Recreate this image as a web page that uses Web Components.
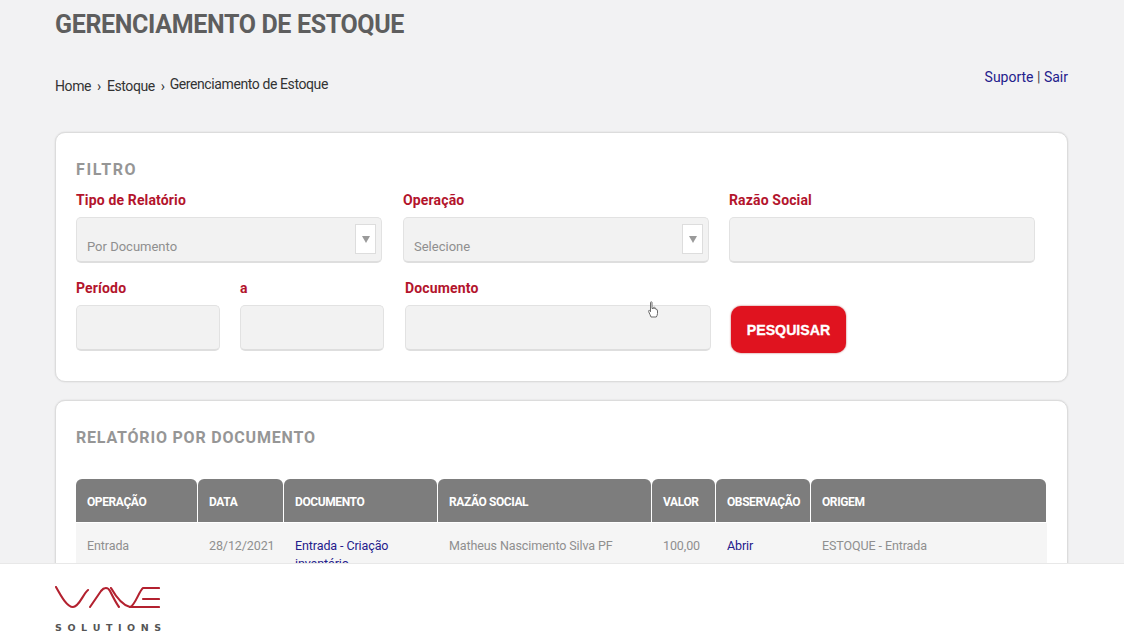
<!DOCTYPE html>
<html lang="pt-BR">
<head>
<meta charset="utf-8">
<title>Gerenciamento de Estoque</title>
<style>
  html, body { margin: 0; height: 100%; overflow: hidden; background: #f2f2f3; }
  body { font-family: Roboto, "DejaVu Sans", sans-serif; }
</style>
</head>
<body>
<stock-page>
  <page-top></page-top>
  <panel-card heading="FILTRO" style="height:250px;--head-top:27px;--head-gap:11px;--head-ls:1.6px">
    <filter-form></filter-form>
  </panel-card>
  <panel-card heading="RELATÓRIO POR DOCUMENTO" style="height:300px;--head-top:27px;--head-gap:31px;--head-ls:.8px">
    <report-table></report-table>
  </panel-card>
</stock-page>
<hand-cursor></hand-cursor>
<wave-footer></wave-footer>

<script>
class StockPage extends HTMLElement {
  connectedCallback () {
    this.attachShadow({mode: 'open'}).innerHTML = `
      <style>
        :host { display: flex; flex-direction: column; gap: 18px; padding: 0 56px 0 55px; }
      </style>
      <slot></slot>
    `;
  }
}

class PageTop extends HTMLElement {
  connectedCallback () {
    this.attachShadow({mode: 'open'}).innerHTML = `
      <style>
        :host { display: block; height: 114px; }
        h1 { margin: 0; padding-top: 9px; font-size: 25px; line-height: 32px; font-weight: 700; letter-spacing: -.35px; color: #5e5e5e; white-space: nowrap; }
        .line { display: flex; justify-content: space-between; margin-top: 35px; font-size: 14px; line-height: 18px; color: #333; }
        .crumbs { display: flex; gap: 6px; padding-top: 1px; letter-spacing: -.4px; }
        .crumbs .last { margin-top: -2px; margin-left: -1px; }
        .links { margin-top: -8px; color: #24208c; }
        .links i { font-style: normal; color: #444; }
      </style>
      <h1>GERENCIAMENTO DE ESTOQUE</h1>
      <div class="line">
        <div class="crumbs">
          <span>Home</span><span>›</span><span>Estoque</span><span>›</span><span class="last">Gerenciamento de Estoque</span>
        </div>
        <div class="links">Suporte <i>|</i> Sair</div>
      </div>
    `;
  }
}

class PanelCard extends HTMLElement {
  connectedCallback () {
    this.attachShadow({mode: 'open'}).innerHTML = `
      <style>
        :host { display: block; box-sizing: border-box; background: #fff; border: 1px solid #dcdcdc; border-radius: 10px; padding: var(--head-top) 20px 0; box-shadow: 0 0 2px rgba(0,0,0,0.12); }
        h2 { margin: 0 0 var(--head-gap); font-size: 16px; line-height: 20px; font-weight: 700; letter-spacing: var(--head-ls); color: #969696; }
      </style>
      <h2>${this.getAttribute('heading')}</h2>
      <slot></slot>
    `;
  }
}

class FormField extends HTMLElement {
  connectedCallback () {
    let value = this.getAttribute('value') || '';
    let arrow = this.hasAttribute('select') ? '<span class="arrow"><svg width="8" height="7" viewBox="0 0 8 7"><path d="M0 0h8L4 7z" fill="#9a9a9a"/></svg></span>' : '';
    this.attachShadow({mode: 'open'}).innerHTML = `
      <style>
        :host { display: block; width: 306px; }
        label { display: block; height: 18px; font-size: 14px; line-height: 19px; font-weight: 700; letter-spacing: .15px; color: #b3142c; white-space: nowrap; }
        .box { position: relative; box-sizing: border-box; height: 46px; margin-top: 8px; padding: 20px 10px 0; background: #f2f2f2; border: 1px solid #e2e2e2; border-bottom: 2px solid #dedede; border-radius: 5px; font-size: 13px; line-height: 18px; color: #8f8f8f; }
        .arrow { position: absolute; top: 6px; right: 5px; width: 21px; height: 30px; display: flex; align-items: center; justify-content: center; background: #fff; border: 1px solid #ddd; box-sizing: border-box; }
      </style>
      <label>${this.getAttribute('label')}</label>
      <div class="box">${value}${arrow}</div>
    `;
  }
}

class FilterForm extends HTMLElement {
  connectedCallback () {
    this.attachShadow({mode: 'open'}).innerHTML = `
      <style>
        :host { display: block; }
        .row { display: flex; gap: 20px; }
        .first form-field:nth-child(2) { margin-left: 1px; }
        .second { margin-top: 16px; }
        .second form-field:nth-child(3) { margin-left: 1px; }
        .short { width: 144px; }
        button { align-self: flex-end; width: 115px; height: 47px; margin-bottom: -2px; padding: 0; border: 0; border-radius: 10px; background: #e0131f; box-shadow: 0 0 2px rgba(160,0,0,.7); color: #fff; font-family: "Liberation Sans", sans-serif; font-size: 14.2px; font-weight: 700; -webkit-text-stroke: .3px #fff; }
      </style>
      <div class="row first">
        <form-field label="Tipo de Relatório" value="Por Documento" select></form-field>
        <form-field label="Operação" value="Selecione" select></form-field>
        <form-field label="Razão Social"></form-field>
      </div>
      <div class="row second">
        <form-field class="short" label="Período"></form-field>
        <form-field class="short" label="a"></form-field>
        <form-field label="Documento"></form-field>
        <button type="button">PESQUISAR</button>
      </div>
    `;
  }
}

class ReportTable extends HTMLElement {
  connectedCallback () {
    let cols = [
      ['OPERAÇÃO', 'Entrada', 121],
      ['DATA', '28/12/2021', 85],
      ['DOCUMENTO', '<a>Entrada - Criação inventário</a>', 153],
      ['RAZÃO SOCIAL', 'Matheus Nascimento Silva PF', 213],
      ['VALOR', '100,00', 63],
      ['OBSERVAÇÃO', '<a>Abrir</a>', 94],
      ['ORIGEM', 'ESTOQUE - Entrada', 235]
    ];
    let grid = cols.map(c => c[2] + 'px').join(' ');
    this.attachShadow({mode: 'open'}).innerHTML = `
      <style>
        :host { display: block; width: 970px; }
        .grid { display: grid; grid-template-columns: ${grid}; column-gap: 1px; }
        .th { box-sizing: border-box; height: 43px; display: flex; align-items: center; padding: 3px 11px 0; background: #7d7d7d; border-radius: 6px 6px 0 0; color: #fff; font-size: 12px; font-weight: 700; letter-spacing: -.4px; white-space: nowrap; }
        .td { box-sizing: border-box; margin-top: 1px; padding: 14px 11px 10px; background: #f5f5f5; margin-right: -1px; color: #8f8f8f; font-size: 12.5px; letter-spacing: -.1px; line-height: 18px; }
        a { color: #24208c; }
      </style>
      <div class="grid">
        ${cols.map(c => `<div class="th">${c[0]}</div>`).join('')}
        ${cols.map(c => `<div class="td">${c[1]}</div>`).join('')}
      </div>
    `;
  }
}

/* mouse pointer that is visible in the capture */
class HandCursor extends HTMLElement {
  connectedCallback () {
    this.attachShadow({mode: 'open'}).innerHTML = `
      <style>
        :host { position: fixed; left: 648px; top: 301px; width: 10px; height: 17px; }
        svg { display: block; }
      </style>
      <svg width="10" height="17" viewBox="0 0 10 17" fill="#fff" stroke="#6a6a6a" stroke-width="1" stroke-linejoin="round">
        <path d="M2.5 1.5C2.5.5 4 .5 4 1.5V7.5H5.5V6.5C5.5 6 6.8 6 6.8 6.5V8C7 7.2 8.2 7.2 8.2 8V9C8.4 8.5 9.5 8.5 9.5 9.2V12.5C9.5 14 8.8 15 8.3 16H3C2.4 14.5 1.5 12.5.6 10.5C.2 9.5 1.2 9 1.8 9.6L2.5 10.8Z"/>
      </svg>
    `;
  }
}

class WaveFooter extends HTMLElement {
  connectedCallback () {
    this.attachShadow({mode: 'open'}).innerHTML = `
      <style>
        :host { position: fixed; left: 0; right: 0; bottom: 0; box-sizing: border-box; height: 79px; padding: 22px 0 0 55px; background: #fff; border-top: 1px solid #e8e8e8; }
        svg { display: block; }
        .sub { margin-top: 13px; width: 106px; display: flex; justify-content: space-between; font-family: "DejaVu Sans", sans-serif; font-size: 9.5px; line-height: 10px; font-weight: 700; color: #555; }
      </style>
      <svg width="105" height="24" viewBox="0 0 105 24" fill="none" stroke="#b3212f" stroke-width="2.1" stroke-linecap="round">
        <path d="M1 1C6 10 12 21 18 21C24 21 28 8 33 4"/>
        <path d="M35 21L46 5C49 1 53 1 55 5C58 11 61 17 64 21"/>
        <path d="M56 2C60 9 66 19 75 21C80 20 84 5 88 2H104"/>
        <path d="M75 21H104M88 13H104"/>
      </svg>
      <div class="sub"><span>S</span><span>O</span><span>L</span><span>U</span><span>T</span><span>I</span><span>O</span><span>N</span><span>S</span></div>
    `;
  }
}

window.customElements.define('stock-page', StockPage);
window.customElements.define('page-top', PageTop);
window.customElements.define('panel-card', PanelCard);
window.customElements.define('form-field', FormField);
window.customElements.define('filter-form', FilterForm);
window.customElements.define('report-table', ReportTable);
window.customElements.define('hand-cursor', HandCursor);
window.customElements.define('wave-footer', WaveFooter);
</script>
</body>
</html>
